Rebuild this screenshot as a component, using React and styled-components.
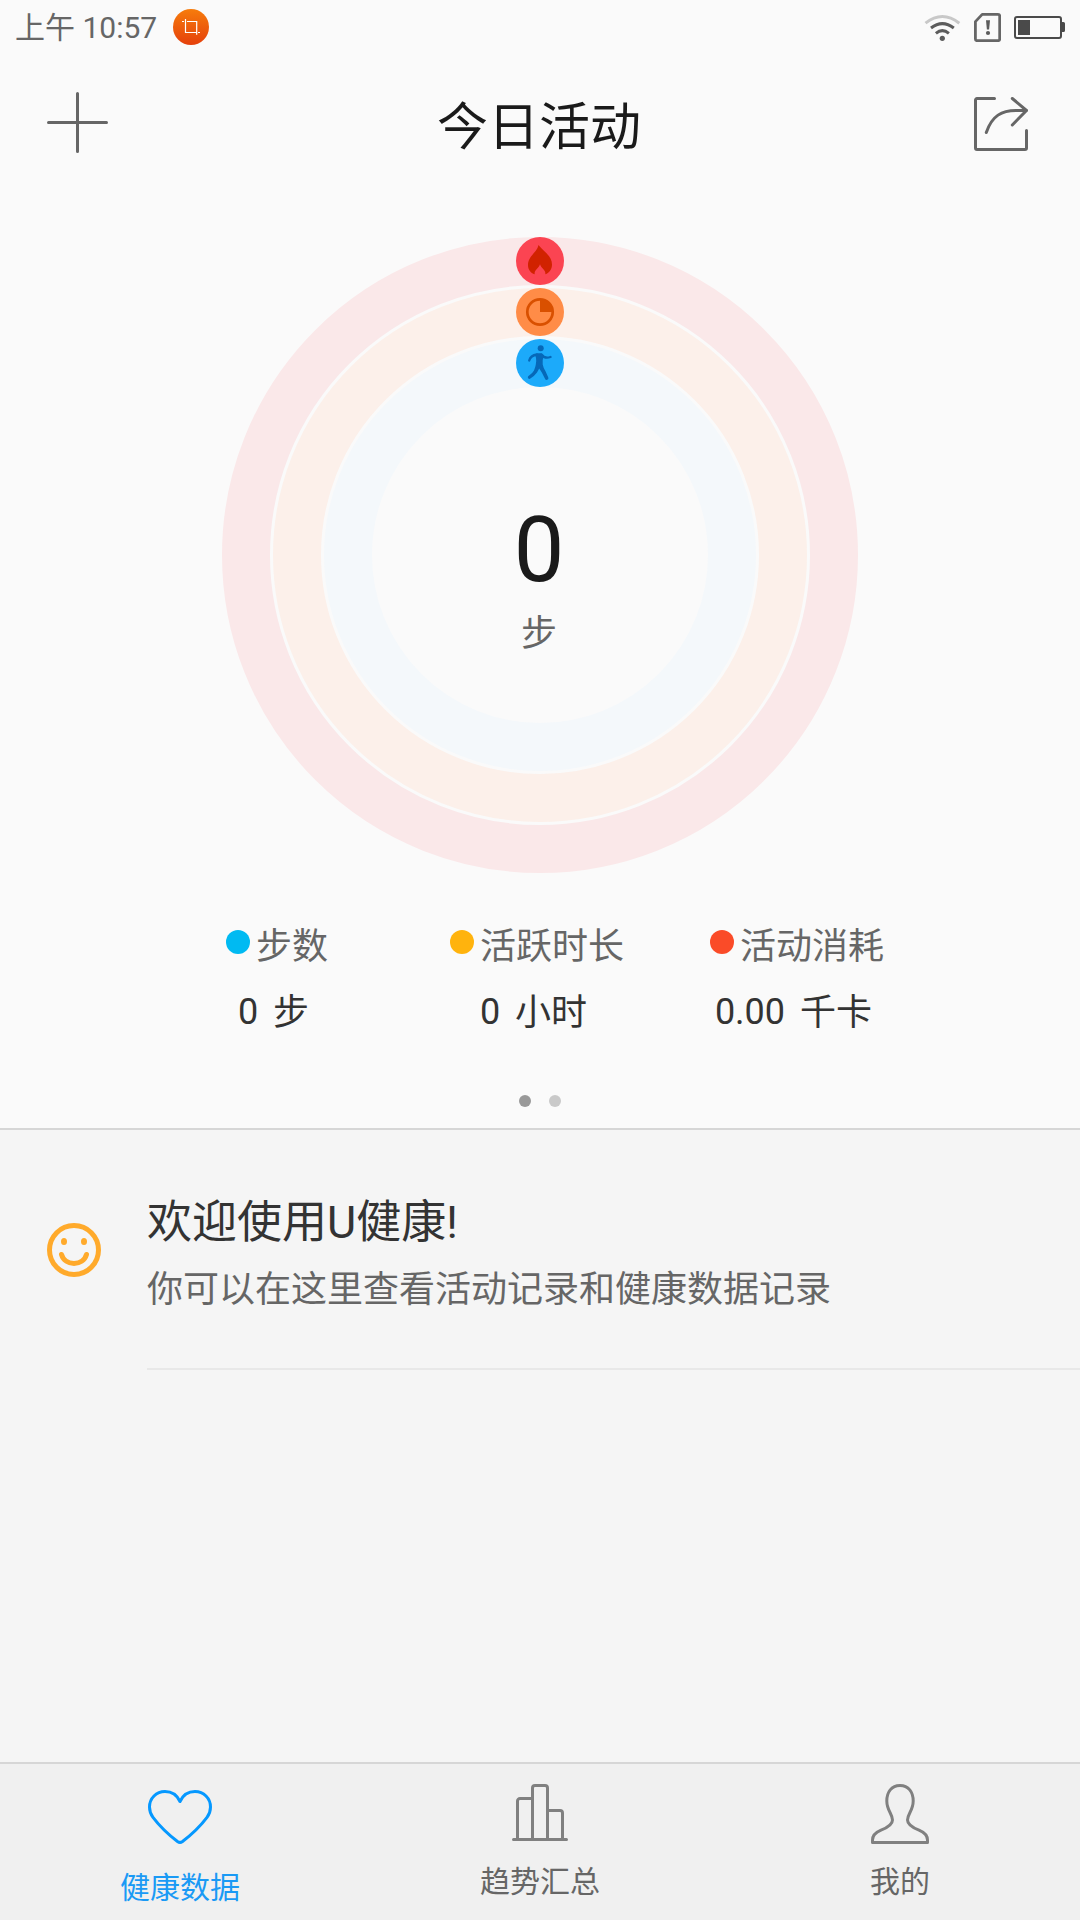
import React from 'react';
import styled, { createGlobalStyle } from 'styled-components';

const GlobalStyle = createGlobalStyle`
	* {
		box-sizing: border-box;
	}
	body {
		margin: 0;
		background: #f5f5f5;
		font-family: Roboto, 'Noto Sans CJK SC', sans-serif;
	}
	svg {
		display: block;
		flex-shrink: 0;
	}
`;

const Screen = styled.div`
	display: flex;
	flex-direction: column;
	width: 1080px;
	height: 1920px;
	overflow: hidden;
`;

const StatusBar = styled.div`
	display: flex;
	justify-content: space-between;
	height: 55px;
	padding: 0 15px;
	color: #666;
	font-size: 30px;
	line-height: 55px;
`;

const StatusLeft = styled.div`
	display: flex;
	gap: 15.5px;

	svg {
		margin-top: 9px;
	}
`;

const StatusRight = styled.div`
	display: flex;
	align-items: center;
	gap: 13px;
`;

const Activity = styled.section`
	height: 1130px;
	flex-shrink: 0;
	background: #fafafa;
	border-bottom: 2px solid #d6d6d6;
`;

const Header = styled.header`
	display: flex;
	justify-content: space-between;
	align-items: flex-start;
	height: 182px;
	padding: 37px 52px 0 47px;

	.share {
		margin-top: 5px;
	}
`;

const Title = styled.h1`
	margin: 1px 0 0;
	padding-right: 4px;
	color: #1a1a1a;
	font-size: 51px;
	font-weight: 400;
	line-height: 70px;
`;

const Chart = styled.div`
	display: grid;
	width: 636px;
	height: 636px;
	margin: 0 auto;

	> * {
		grid-area: 1 / 1;
	}
`;

const Total = styled.div`
	display: flex;
	flex-direction: column;
	align-items: center;
	padding: 264px 2px 0 0;

	strong {
		color: #1a1a1a;
		font-size: 90px;
		font-weight: 400;
		line-height: 100px;
	}
	span {
		margin-top: 8px;
		color: #666;
		font-size: 36px;
		line-height: 50px;
	}
`;

const Legend = styled.div`
	display: grid;
	grid-template-columns: repeat(3, 260px);
	margin: 49px 0 0 147px;
`;

const LegendItem = styled.div`
	display: flex;
	flex-direction: column;
	align-items: center;
	gap: 15px;
	font-size: 36px;
	line-height: 50px;
`;

const LegendLabel = styled.div`
	display: flex;
	gap: 6px;
	color: #666;

	&::before {
		content: '';
		width: 24px;
		height: 24px;
		margin-top: 8px;
		border-radius: 50%;
		background: ${(props) => props.$color};
	}
`;

const LegendValue = styled.div`
	display: flex;
	gap: 15px;
	height: 50px;
	padding-right: 7px;
	color: #333;

	span:last-child {
		margin-top: 1px;
	}
`;

const Pager = styled.div`
	display: flex;
	justify-content: center;
	gap: 18px;
	margin-top: 58px;
`;

const PagerDot = styled.span`
	width: 12px;
	height: 12px;
	border-radius: 50%;
	background: ${(props) => (props.$active ? '#999' : '#c9c9c9')};
`;

const Feed = styled.section`
	flex: 1;
	background: #f5f5f5;
`;

const FeedItem = styled.div`
	display: flex;
	padding-left: 47px;

	svg {
		margin-top: 93px;
	}
`;

const FeedText = styled.div`
	flex: 1;
	height: 240px;
	margin-left: 46px;
	padding-top: 63px;
	border-bottom: 2px solid #e8e8e8;

	h2 {
		margin: 0;
		color: #333;
		font-size: 45px;
		font-weight: 400;
		line-height: 60px;
	}
	p {
		margin: 12px 0 0;
		color: #666;
		font-size: 36px;
		line-height: 50px;
	}
`;

const TabBar = styled.nav`
	display: grid;
	grid-template-columns: repeat(3, 1fr);
	height: 158px;
	border-top: 2px solid #d6d6d6;
	background: #f0f0f0;
`;

const Tab = styled.div`
	display: flex;
	flex-direction: column;
	align-items: center;
	justify-content: space-between;
	height: ${(props) => (props.$active ? '144px' : '138px')};
	padding-top: ${(props) => (props.$active ? '26px' : '20px')};
	color: ${(props) => (props.$active ? '#1a9af5' : '#666')};
	font-size: 30px;
	line-height: 40px;
`;

const stroke = {
	fill: 'none',
	strokeWidth: 3,
	strokeLinecap: 'round',
	strokeLinejoin: 'round',
};

const CropBadge = () => (
	<svg width='36' height='36' viewBox='0 0 36 36'>
		<defs>
			<linearGradient id='badge' x1='0' y1='0' x2='0' y2='1'>
				<stop offset='0' stopColor='#f67c0c' />
				<stop offset='1' stopColor='#e5400b' />
			</linearGradient>
		</defs>
		<circle cx='18' cy='18' r='18' fill='url(#badge)' />
		<path
			d='M9 12.5h2M14 12.5h9.7v13.2M12.5 10v13.5h11M25 23.5h2'
			fill='none'
			stroke='#fff'
			strokeWidth='1.2'
		/>
	</svg>
);

const WifiIcon = () => (
	<svg width='37' height='29' viewBox='0 0 37 29' {...stroke} strokeLinecap='butt'>
		<path d='M1.5 10.2Q18.3-3.2 35.3 10.2' stroke='#c8c8c8' />
		<path d='M7 15Q18.3 6.2 29.8 15M11.9 20.3Q18.3 15 24.9 20.3' stroke='#5c5c5c' />
		<circle cx='18.3' cy='25.3' r='2.6' fill='#5c5c5c' />
	</svg>
);

const SimIcon = () => (
	<svg width='27' height='29' viewBox='0 0 27 29'>
		<path
			d='M8.2 1.4H24a1.7 1.7 0 0 1 1.7 1.7V26a1.7 1.7 0 0 1-1.7 1.7H3A1.7 1.7 0 0 1 1.4 26V8.6z'
			{...stroke}
			stroke='#666'
			strokeWidth='2.8'
		/>
		<path d='M12 7.2h4l-.9 9.4h-2.2z' fill='#5c5c5c' />
		<circle cx='14' cy='20' r='2.1' fill='#5c5c5c' />
	</svg>
);

const BatteryIcon = () => (
	<svg width='51' height='23' viewBox='0 0 51 23'>
		<rect x='1' y='1' width='46' height='21' rx='2' fill='none' stroke='#4a4a4a' strokeWidth='2' />
		<path d='M4 4h12v15H4zM48 6h1.5a1.5 1.5 0 0 1 1.5 1.5v7a1.5 1.5 0 0 1-1.5 1.5H48z' fill='#4a4a4a' />
	</svg>
);

const PlusIcon = () => (
	<svg width='61' height='61' viewBox='0 0 61 61' {...stroke} stroke='#666'>
		<path d='M30.5 1.5v58M1.5 30.5h58' />
	</svg>
);

const ShareIcon = () => (
	<svg className='share' width='54' height='54' viewBox='0 0 54 54' {...stroke} stroke='#666'>
		<path d='M20.5 1.5H3A1.5 1.5 0 0 0 1.5 3v48A1.5 1.5 0 0 0 3 52.5h48a1.5 1.5 0 0 0 1.5-1.5V33.5' />
		<path d='M12.3 35.5C18 18.5 28 13.5 42 13.5h10' />
		<path d='M38.3 1.5L52.5 13.5L38.3 28' />
	</svg>
);

const Rings = () => (
	<svg width='636' height='636' viewBox='0 0 636 636'>
		<g fill='none' strokeWidth='48'>
			<circle cx='318' cy='318' r='294' stroke='#fae8e9' />
			<circle cx='318' cy='318' r='243' stroke='#fcf0ea' />
			<circle cx='318' cy='318' r='192' stroke='#f4f8fb' />
		</g>
		{/* calories */}
		<g transform='translate(318 24)'>
			<circle r='24' fill='#fb4452' />
			<path
				d='M-1.6-16C-2.5-9-12-5-12 4C-12 8.5-9.5 12-5.3 13.3C-6 8.5-1.5 8 0 3.2C1.500 8 6 8.5 5.3 13.3C9.5 12 12 8 12 3.5C12-4.5 4.500-9-1.6-16z'
				fill='#d12200'
			/>
		</g>
		{/* active time */}
		<g transform='translate(318 75)'>
			<circle r='24' fill='#ff8c47' />
			<circle r='12.7' fill='none' stroke='#d95000' strokeWidth='2.7' />
			<path d='M0 0V-12.7A12.7 12.7 0 0 1 12.7 0z' fill='#d95000' />
		</g>
		{/* steps */}
		<g transform='translate(318 126)'>
			<circle r='24' fill='#1caafa' />
			<path
				d='M-3-8.5Q-9.5-7.5-10.8-2.5M1.5-8.5Q4.5-4 10.5-6'
				fill='none'
				stroke='#0668b8'
				strokeWidth='2.3'
				strokeLinecap='round'
			/>
			<path
				d='M-5-8.5Q-3.5-10-1-9.8H1L4-7.5Q2.2-3.5 2.7 1.5Q3.5 5.5 5.5 8.2L8.3 14.5A1.7 1.7 0 0 1 5 15.7L1.8 9.5L-.8 5.5L-3 9.5Q-5.5 13-10 15.8A1.6 1.6 0 0 1-11.8 13.3Q-7.5 10.5-6 7.5Q-4.5 4-4.2 1.5Q-3.5-3-4-5z'
				fill='#0668b8'
			/>
			<circle cx='.7' cy='-14.8' r='3' fill='#0668b8' />
		</g>
	</svg>
);

const SmileIcon = () => (
	<svg width='54' height='54' viewBox='0 0 54 54' {...stroke} stroke='#ffaa2b' strokeWidth='5'>
		<circle cx='27' cy='27' r='24.5' />
		<path d='M14.5 31.5C18 43.5 36 43.5 39.5 31.5' />
		<g fill='#ffaa2b' stroke='none'>
			<ellipse cx='17' cy='18.5' rx='3' ry='3.6' />
			<ellipse cx='37' cy='18.5' rx='3' ry='3.6' />
		</g>
	</svg>
);

const HeartIcon = () => (
	<svg width='64' height='54' viewBox='0 0 64 54' {...stroke} stroke='#0598ff'>
		<path d='M32 11.5C29 5 23.5 1.5 17 1.5C8.3 1.5 1.5 8.3 1.5 17C1.5 21 2.5 24 5 27.3C11 35.3 20.5 44.5 29.5 51.5Q32 53.3 34.5 51.5C43.5 44.5 53 35.3 59 27.3C61.5 24 62.5 21 62.5 17C62.5 8.3 55.7 1.5 47 1.5C40.5 1.5 35 5 32 11.5z' />
	</svg>
);

const BarsIcon = () => (
	<svg width='56' height='57' viewBox='0 0 56 57' {...stroke} stroke='#808080'>
		<path d='M1.5 55.5h53' />
		<path d='M5.5 55V17a2.5 2.5 0 0 1 2.5-2.5h12.5M20.5 55V4A2.5 2.5 0 0 1 23 1.5h10A2.5 2.5 0 0 1 35.5 4v51M35.5 26.5H48a2.5 2.5 0 0 1 2.5 2.5v26' />
	</svg>
);

const PersonIcon = () => (
	<svg width='58' height='60' viewBox='0 0 58 60' {...stroke} stroke='#808080'>
		<path d='M29 1.5C20.5 1.5 15.8 8 15.8 17C15.8 26.5 21.5 30 21.5 36C21.5 41 15.5 44 10 46.2C4 48.7 1.5 51.5 1.5 56V58.5H56.5V56C56.5 51.5 54 48.7 48 46.2C42.5 44 36.5 41 36.5 36C36.5 30 42.2 26.5 42.2 17C42.2 8 37.5 1.5 29 1.5z' />
	</svg>
);

const stats = [
	{ label: '步数', value: '0', unit: '步', color: '#00baf2' },
	{ label: '活跃时长', value: '0', unit: '小时', color: '#ffb30d' },
	{ label: '活动消耗', value: '0.00', unit: '千卡', color: '#fa4b28' },
];

const tabs = [
	{ label: '健康数据', Icon: HeartIcon, active: true },
	{ label: '趋势汇总', Icon: BarsIcon },
	{ label: '我的', Icon: PersonIcon },
];

function App() {
	return (
		<Screen>
			<GlobalStyle />
			<Activity>
				<StatusBar>
					<StatusLeft>
						<span>上午 10:57</span>
						<CropBadge />
					</StatusLeft>
					<StatusRight>
						<WifiIcon />
						<SimIcon />
						<BatteryIcon />
					</StatusRight>
				</StatusBar>
				<Header>
					<PlusIcon />
					<Title>今日活动</Title>
					<ShareIcon />
				</Header>
				<Chart>
					<Rings />
					<Total>
						<strong>0</strong>
						<span>步</span>
					</Total>
				</Chart>
				<Legend>
					{stats.map((stat) => (
						<LegendItem key={stat.label}>
							<LegendLabel $color={stat.color}>{stat.label}</LegendLabel>
							<LegendValue>
								<span>{stat.value}</span>
								<span>{stat.unit}</span>
							</LegendValue>
						</LegendItem>
					))}
				</Legend>
				<Pager>
					<PagerDot $active />
					<PagerDot />
				</Pager>
			</Activity>
			<Feed>
				<FeedItem>
					<SmileIcon />
					<FeedText>
						<h2>欢迎使用U健康!</h2>
						<p>你可以在这里查看活动记录和健康数据记录</p>
					</FeedText>
				</FeedItem>
			</Feed>
			<TabBar>
				{tabs.map(({ label, Icon, active }) => (
					<Tab key={label} $active={active}>
						<Icon />
						<span>{label}</span>
					</Tab>
				))}
			</TabBar>
		</Screen>
	);
}

export default App;
